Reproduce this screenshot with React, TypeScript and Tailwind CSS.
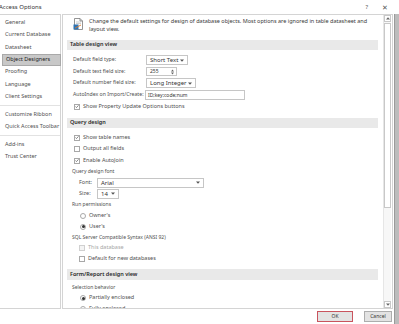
import React from "react";

const navItems = [
  ["General", "Current Database", "Datasheet", "Object Designers", "Proofing", "Language", "Client Settings"],
  ["Customize Ribbon", "Quick Access Toolbar"],
  ["Add-ins", "Trust Center"],
];

const Chevron = () => (
  <svg width="4" height="3" viewBox="0 0 4 3" className="shrink-0">
    <path d="M0 0.5 L4 0.5 L2 2.7 Z" fill="#555" />
  </svg>
);

const Dropdown = ({ value, width }: { value: string; width: string }) => (
  <div className={`${width} h-[10px] border border-[#c6c6c6] bg-white flex items-center justify-between pl-[3px] pr-[3px] text-[6px] text-[#333]`}>
    <span>{value}</span>
    <Chevron />
  </div>
);

const Check = ({ checked, disabled }: { checked?: boolean; disabled?: boolean }) => (
  <div className={`w-[6px] h-[6px] border ${disabled ? "border-[#d0d0d0] bg-[#f4f4f4]" : "border-[#a8a8a8] bg-white"} flex items-center justify-center shrink-0`}>
    {checked && (
      <svg width="5" height="5" viewBox="0 0 5 5">
        <path d="M0.6 2.6 L1.9 3.8 L4.4 1" stroke="#444" strokeWidth="0.8" fill="none" />
      </svg>
    )}
  </div>
);

const Radio = ({ on }: { on?: boolean }) => (
  <div className="w-[6px] h-[6px] rounded-full border border-[#a8a8a8] bg-white flex items-center justify-center shrink-0">
    {on && <div className="w-[3px] h-[3px] rounded-full bg-[#333]" />}
  </div>
);

const SectionBar = ({ title, h }: { title: string; h: string }) => (
  <div className={`${h} shrink-0 bg-[#e9e9e9] mx-[4px] mr-[5px] flex items-center pl-[3px] text-[5.5px] font-semibold text-[#262626]`}>
    {title}
  </div>
);

const FieldRow = ({ label, h, children }: { label: string; h: string; children: React.ReactNode }) => (
  <div className={`${h} shrink-0 flex items-center pl-[10px]`}>
    <span className="w-[73px] shrink-0 text-[5.2px]">{label}</span>
    {children}
  </div>
);

const CheckRow = ({ label, h, checked, indent, disabled }: { label: string; h: string; checked?: boolean; indent?: boolean; disabled?: boolean }) => (
  <div className={`${h} shrink-0 flex items-center gap-[3px] ${indent ? "pl-[16px]" : "pl-[11px]"} ${disabled ? "text-[#a6a6a6]" : ""}`}>
    <Check checked={checked} disabled={disabled} />
    <span>{label}</span>
  </div>
);

const RadioRow = ({ label, h, on }: { label: string; h: string; on?: boolean }) => (
  <div className={`${h} shrink-0 flex items-center gap-[3px] pl-[17px]`}>
    <Radio on={on} />
    <span>{label}</span>
  </div>
);

const DocIcon = () => (
  <svg width="11" height="12" viewBox="0 0 11 12" className="shrink-0">
    <path d="M1.5 0.5 H7 L9.5 3 V11.5 H1.5 Z" fill="#fff" stroke="#7a7a7a" strokeWidth="0.8" />
    <path d="M7 0.5 V3 H9.5" fill="none" stroke="#7a7a7a" strokeWidth="0.8" />
    <path d="M3 4 H8 M3 5.5 H8" stroke="#b0b0b0" strokeWidth="0.6" />
    <rect x="0.5" y="6.5" width="5" height="5" fill="#2e75b6" />
    <path d="M2 10 L8 7" stroke="#e07b2a" strokeWidth="0.9" />
  </svg>
);

export default function App() {
  return (
    <div className="w-[399px] h-[324px] bg-white overflow-hidden flex flex-col font-['Segoe_UI','Noto_Sans',sans-serif] text-[5.5px] leading-none text-[#505050] whitespace-nowrap">
      {/* title bar */}
      <div className="h-[14px] flex items-center shrink-0">
        <span className="-ml-[1px] text-[#333] text-[6px]">Access Options</span>
        <span className="ml-auto text-[#555] text-[6px]">?</span>
        <span className="ml-[14px] mr-[11px] text-[#555] text-[7px]">✕</span>
      </div>

      <div className="flex flex-1 min-h-0">
        <div className="flex flex-col w-[394px]">
          {/* body */}
          <div className="flex h-[295px]">
            {/* nav */}
            <div className="w-[61px] border-t border-r border-b border-[#d4d4d4] pt-[1px] flex flex-col">
              {navItems.map((group, gi) => (
                <div key={gi} className={`flex flex-col ${gi > 0 ? "border-t border-[#e2e2e2] mt-[2px] pt-[2px]" : ""}`}>
                  {group.map((item) =>
                    item === "Object Designers" ? (
                      <div key={item} className="h-[12px] ml-[2px] -mr-[1px] bg-[#c8c8c8] border border-[#a9a9a9] flex items-center pl-[3px] text-[#222]">
                        {item}
                      </div>
                    ) : (
                      <div key={item} className="h-[12.5px] flex items-center pl-[5px]">
                        {item}
                      </div>
                    )
                  )}
                </div>
              ))}
            </div>

            {/* content */}
            <div className="ml-[1px] w-[331px] border border-[#d4d4d4] flex min-h-0">
              <div className="flex-1 flex flex-col overflow-hidden">
                <div className="h-[25px] shrink-0 flex items-start pt-[3px] pl-[10px] gap-[5px]">
                  <DocIcon />
                  <p className="text-[5.5px] leading-[8px] w-[294px] whitespace-normal text-[#3a3a3a] -mt-[1px]">
                    Change the default settings for design of database objects. Most options are ignored in table datasheet and layout view.
                  </p>
                </div>

                <SectionBar title="Table design view" h="h-[10px]" />
                <div className="h-[4px] shrink-0" />
                <FieldRow label="Default field type:" h="h-[12px]">
                  <Dropdown value="Short Text" width="w-[42px]" />
                </FieldRow>
                <FieldRow label="Default text field size:" h="h-[11px]">
                  <div className="w-[31px] h-[9px] border border-[#c6c6c6] flex items-center justify-between pl-[3px] pr-[2px] text-[5px] text-[#333]">
                    <span>255</span>
                    <svg width="3" height="6" viewBox="0 0 3 6">
                      <path d="M0 2.4 L1.5 0.6 L3 2.4 Z M0 3.6 L1.5 5.4 L3 3.6 Z" fill="#666" />
                    </svg>
                  </div>
                </FieldRow>
                <FieldRow label="Default number field size:" h="h-[12px]">
                  <Dropdown value="Long Integer" width="w-[50px]" />
                </FieldRow>
                <FieldRow label="AutoIndex on Import/Create:" h="h-[12px]">
                  <div className="-ml-[1px] w-[100px] h-[10px] border border-[#c6c6c6] flex items-center pl-[2px] text-[5px] text-[#333]">
                    ID;key;code;num
                  </div>
                </FieldRow>
                <CheckRow label="Show Property Update Options buttons" h="h-[11px]" checked />
                <div className="h-[6px] shrink-0" />

                <SectionBar title="Query design" h="h-[10px]" />
                <div className="h-[4px] shrink-0" />
                <CheckRow label="Show table names" h="h-[11px]" checked />
                <CheckRow label="Output all fields" h="h-[12px]" />
                <CheckRow label="Enable AutoJoin" h="h-[11px]" checked />
                <div className="h-[11px] shrink-0 flex items-center pl-[9px] text-[5px]">Query design font</div>
                <div className="h-[11px] shrink-0 flex items-center pl-[16px]">
                  <span className="w-[18px]">Font:</span>
                  <Dropdown value="Arial" width="w-[107px]" />
                </div>
                <div className="h-[11px] shrink-0 flex items-center pl-[16px]">
                  <span className="w-[18px]">Size:</span>
                  <Dropdown value="14" width="w-[22px]" />
                </div>
                <div className="h-[11px] shrink-0 flex items-center pl-[9px] text-[5px]">Run permissions</div>
                <RadioRow label="Owner's" h="h-[11px]" />
                <RadioRow label="User's" h="h-[11px]" on />
                <div className="h-[10px] shrink-0 flex items-center pl-[9px] text-[5px]">SQL Server Compatible Syntax (ANSI 92)</div>
                <CheckRow label="This database" h="h-[11px]" indent disabled />
                <CheckRow label="Default for new databases" h="h-[11px]" indent />
                <div className="h-[5px] shrink-0" />

                <SectionBar title="Form/Report design view" h="h-[11px]" />
                <div className="h-[2px] shrink-0" />
                <div className="h-[11px] shrink-0 flex items-center pl-[9px] text-[5px]">Selection behavior</div>
                <RadioRow label="Partially enclosed" h="h-[10px]" on />
                <RadioRow label="Fully enclosed" h="h-[11px]" />
              </div>

              {/* scrollbar */}
              <div className="w-[8px] mr-[1px] flex flex-col border-l border-[#e6e6e6] bg-[#f7f7f7]">
                <div className="h-[7px] border border-[#c8c8c8] bg-white flex items-center justify-center">
                  <svg width="4" height="3" viewBox="0 0 4 3">
                    <path d="M0 2.5 L2 0.3 L4 2.5 Z" fill="#666" />
                  </svg>
                </div>
                <div className="h-[185px] mt-[1px] border border-[#c8c8c8] bg-white" />
                <div className="flex-1" />
                <div className="h-[7px] border border-[#c8c8c8] bg-white flex items-center justify-center">
                  <svg width="4" height="3" viewBox="0 0 4 3">
                    <path d="M0 0.5 L2 2.7 L4 0.5 Z" fill="#666" />
                  </svg>
                </div>
              </div>
            </div>
          </div>

          {/* footer */}
          <div className="flex-1 flex items-start justify-end pt-[2px] pr-[2px] gap-[11px]">
            <button className="w-[36px] h-[11px] border border-[#c9545e] bg-[#e3e3e3] text-[5px] text-[#333] flex items-center justify-center">
              OK
            </button>
            <button className="w-[28px] h-[11px] border border-[#adadad] bg-[#e3e3e3] text-[5px] text-[#333] flex items-center justify-center">
              Cancel
            </button>
          </div>
        </div>

        {/* window edge */}
        <div className="w-[5px] bg-[#bcbcbc] border-l border-[#9a9a9a]" />
      </div>
    </div>
  );
}
